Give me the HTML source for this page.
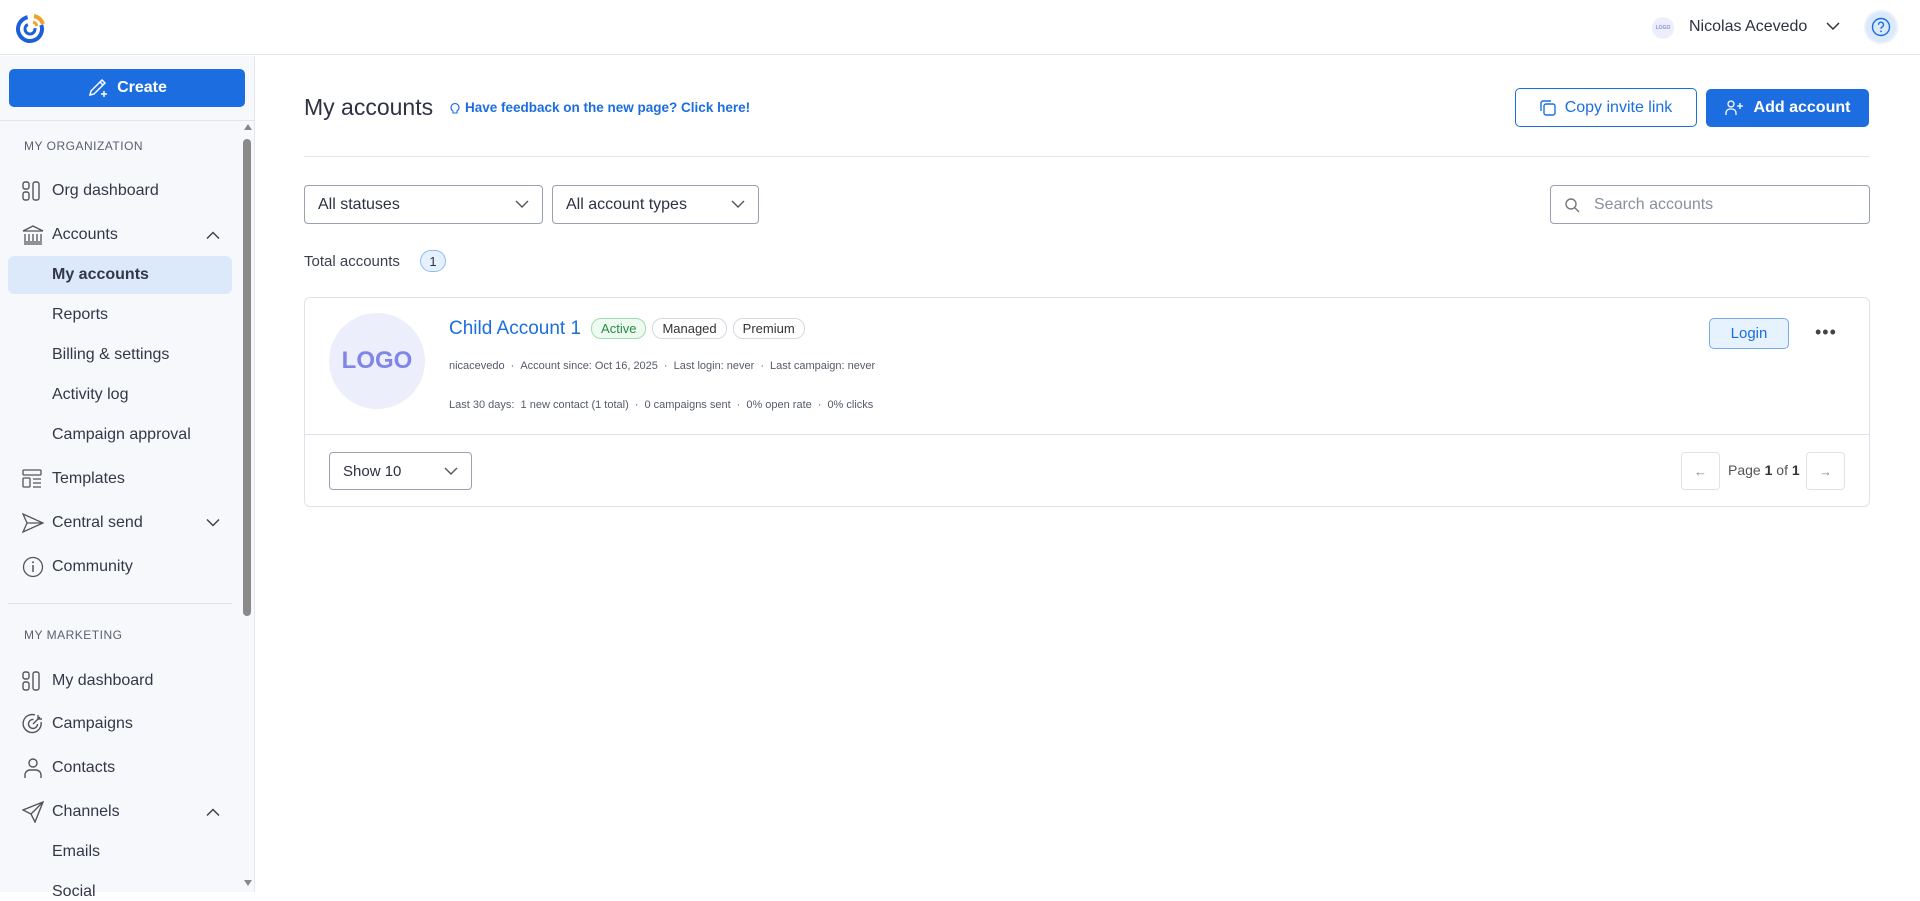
<!DOCTYPE html>
<html><head><meta charset="utf-8">
<style>
*{box-sizing:border-box;margin:0;padding:0}
body{width:1920px;height:892px;overflow:hidden;background:#fff;font-family:"Liberation Sans",sans-serif;color:#2d3142;position:relative}
.a{position:absolute}
.hdr{left:0;top:0;width:1920px;height:55px;border-bottom:1px solid #e3e5ea;background:#fff}
.side{left:0;top:56px;width:255px;height:836px;background:#f7f8fc;border-right:1px solid #e6e8ee}
.create{left:9px;top:69px;width:236px;height:38px;background:#1c6ee0;border-radius:5px;color:#fff;font-weight:bold;font-size:16px;display:flex;align-items:center;justify-content:center;gap:8px}
.sec{left:24px;font-size:12px;letter-spacing:.5px;color:#5a5f70}
.it{left:52px;font-size:16px;color:#333848;transform:translateY(-50%)}
.ic{left:22px;transform:translateY(-50%)}
.chev{left:206px;transform:translateY(-50%)}
.sel{border:1px solid #9aa0b0;border-radius:4px;height:39px;display:flex;align-items:center;padding:0 13px;font-size:16px;color:#2d3142;justify-content:space-between}
.pill{display:inline-block;border:1px solid #d5d8df;border-radius:10px;font-size:13px;padding:2px 9px;margin-left:6px;vertical-align:middle;color:#333}
.meta{font-size:11px;color:#555b6b;white-space:nowrap}
.meta b{font-weight:normal;margin:0 6px}
</style></head><body>
<div class="a hdr"></div>
<svg class="a" style="left:14px;top:12px" width="34" height="32" viewBox="0 0 34 32">
<circle cx="16" cy="17" r="12" fill="none" stroke="#1c5fd8" stroke-width="4" stroke-dasharray="58 20" transform="rotate(-20 16 17)"/>
<circle cx="16" cy="17" r="5" fill="none" stroke="#1c5fd8" stroke-width="3" stroke-dasharray="22 10" transform="rotate(-10 16 17)"/>
<path d="M20 4 A12 12 0 0 1 29 12" stroke="#f0a12a" stroke-width="4" fill="none"/>
<path d="M19 10 A6 6 0 0 1 23 14" stroke="#f0a12a" stroke-width="3" fill="none"/>
</svg>
<div class="a" style="left:1652px;top:17px;width:22px;height:22px;border-radius:50%;background:#eceefb;font-size:5px;color:#8a8fe0;display:flex;align-items:center;justify-content:center;font-weight:bold">LOGO</div>
<div class="a" style="left:1689px;top:18px;font-size:16px;color:#2d3142">Nicolas Acevedo</div>
<svg class="a" style="left:1826px;top:21px" width="14" height="10"><path d="M1 2l6 6 6-6" stroke="#333" stroke-width="1.5" fill="none"/></svg>
<div class="a" style="left:1866px;top:12px;width:30px;height:30px;border-radius:50%;background:#dbe9fb;box-shadow:0 0 0 2px #e8f1fd"></div>
<svg class="a" style="left:1871px;top:17px" width="20" height="20" viewBox="0 0 20 20"><circle cx="10" cy="10" r="8.5" fill="none" stroke="#1c6ee0" stroke-width="1.4"/><path d="M7.5 7.8a2.5 2.5 0 1 1 3.5 2.2c-.8.4-1 .9-1 1.7" stroke="#1c6ee0" stroke-width="1.4" fill="none"/><circle cx="10" cy="14.3" r=".9" fill="#1c6ee0"/></svg>

<div class="a side"></div>
<div class="a create"><svg width="22" height="20" viewBox="0 0 22 20"><path d="M3 17l1-4 9-9 3 3-9 9z M13 4l2-2 3 3-2 2" stroke="#fff" stroke-width="1.5" fill="none"/><path d="M17 13v6M14 16h6" stroke="#fff" stroke-width="1.5"/></svg>Create</div>
<div class="a" style="left:0;top:120px;width:255px;border-top:1px solid #e3e5ea"></div>
<div class="a" style="left:244px;top:124px;width:0;height:0;border:4px solid transparent;border-bottom:6px solid #888;border-top:0"></div>
<div class="a" style="left:243px;top:139px;width:8px;height:477px;background:#8a8a8a;border-radius:4px"></div>
<div class="a" style="left:244px;top:880px;border:4px solid transparent;border-top:6px solid #888;border-bottom:0"></div>

<div class="a sec" style="top:139px">MY ORGANIZATION</div>
<div class="a" style="left:8px;top:256px;width:224px;height:38px;background:#dbe9fb;border-radius:6px"></div>
<svg class="a ic" style="top:191px" width="22" height="20" viewBox="0 0 22 20"><rect x="1" y="1" width="6" height="7" rx="2" fill="none" stroke="#555" stroke-width="1.4"/><rect x="1" y="11" width="6" height="8" rx="2" fill="none" stroke="#555" stroke-width="1.4"/><rect x="11" y="1" width="6" height="18" rx="2" fill="none" stroke="#555" stroke-width="1.4"/></svg>
<div class="a it" style="top:191px">Org dashboard</div>
<svg class="a ic" style="top:235px" width="22" height="20" viewBox="0 0 22 20"><path d="M1 6l10-5 10 5H1zM2 19h18M3 9v7M7 9v7M11 9v7M15 9v7M19 9v7M2 17h18" stroke="#555" stroke-width="1.3" fill="none"/></svg>
<div class="a it" style="top:235px">Accounts</div>
<svg class="a chev" style="top:235px" width="14" height="9"><path d="M1 8l6-6 6 6" stroke="#444" stroke-width="1.5" fill="none"/></svg>
<div class="a it" style="top:275px;font-weight:bold">My accounts</div>
<div class="a it" style="top:315px">Reports</div>
<div class="a it" style="top:355px">Billing &amp; settings</div>
<div class="a it" style="top:395px">Activity log</div>
<div class="a it" style="top:435px">Campaign approval</div>
<svg class="a ic" style="top:479px" width="22" height="20" viewBox="0 0 22 20"><rect x="1" y="1" width="18" height="5" rx="1" fill="none" stroke="#555" stroke-width="1.3"/><rect x="1" y="9" width="7" height="9" rx="1" fill="none" stroke="#555" stroke-width="1.3"/><path d="M11 10h8M11 14h8M11 18h8" stroke="#555" stroke-width="1.3"/></svg>
<div class="a it" style="top:479px">Templates</div>
<svg class="a ic" style="top:523px" width="22" height="20" viewBox="0 0 22 20"><path d="M1 1l20 9-20 9 4-9zM5 10h16" stroke="#555" stroke-width="1.3" fill="none"/></svg>
<div class="a it" style="top:523px">Central send</div>
<svg class="a chev" style="top:523px" width="14" height="9"><path d="M1 1l6 6 6-6" stroke="#444" stroke-width="1.5" fill="none"/></svg>
<svg class="a ic" style="top:567px" width="22" height="22" viewBox="0 0 22 22"><circle cx="11" cy="11" r="9.5" fill="none" stroke="#555" stroke-width="1.3"/><path d="M11 9v7" stroke="#555" stroke-width="1.5"/><circle cx="11" cy="6.3" r="1" fill="#555"/></svg>
<div class="a it" style="top:567px">Community</div>
<div class="a" style="left:8px;top:603px;width:224px;border-top:1px solid #e1e3e8"></div>
<div class="a sec" style="top:628px">MY MARKETING</div>
<svg class="a ic" style="top:681px" width="22" height="20" viewBox="0 0 22 20"><rect x="1" y="1" width="6" height="7" rx="2" fill="none" stroke="#555" stroke-width="1.4"/><rect x="1" y="11" width="6" height="8" rx="2" fill="none" stroke="#555" stroke-width="1.4"/><rect x="11" y="1" width="6" height="18" rx="2" fill="none" stroke="#555" stroke-width="1.4"/></svg>
<div class="a it" style="top:681px">My dashboard</div>
<svg class="a ic" style="top:724px" width="22" height="22" viewBox="0 0 22 22"><path d="M19 9a9 9 0 1 1-6-7" stroke="#555" stroke-width="1.4" fill="none"/><path d="M15.5 11a4.5 4.5 0 1 1-4-4.5" stroke="#555" stroke-width="1.4" fill="none"/><path d="M11 11l7-7M16 2v4h4" stroke="#555" stroke-width="1.4" fill="none"/></svg>
<div class="a it" style="top:724px">Campaigns</div>
<svg class="a ic" style="top:768px" width="22" height="22" viewBox="0 0 22 22"><circle cx="11" cy="6" r="4" fill="none" stroke="#555" stroke-width="1.4"/><path d="M3 21v-3a5 5 0 0 1 5-5h6a5 5 0 0 1 5 5v3" stroke="#555" stroke-width="1.4" fill="none"/></svg>
<div class="a it" style="top:768px">Contacts</div>
<svg class="a ic" style="top:812px" width="22" height="22" viewBox="0 0 22 22"><path d="M21 1L1 9l8 4 4 8zM21 1L9 13" stroke="#555" stroke-width="1.4" fill="none"/></svg>
<div class="a it" style="top:812px">Channels</div>
<svg class="a chev" style="top:812px" width="14" height="9"><path d="M1 8l6-6 6 6" stroke="#444" stroke-width="1.5" fill="none"/></svg>
<div class="a it" style="top:852px">Emails</div>
<div class="a it" style="top:892px">Social</div>

<div class="a" style="left:304px;top:94px;font-size:23px;color:#2d3142">My accounts</div>
<svg class="a" style="left:450px;top:100px" width="10" height="15" viewBox="0 0 10 15"><path d="M3 11a4 4 0 1 1 4 0v2H3z" stroke="#1c6ee0" stroke-width="1.1" fill="none"/></svg>
<div class="a" style="left:465px;top:100px;font-size:13.5px;font-weight:bold;color:#1c6ee0">Have feedback on the new page? Click here!</div>
<div class="a" style="left:1515px;top:88px;width:182px;height:39px;border:1px solid #1c6ee0;border-radius:5px;color:#1c6ee0;font-size:16px;display:flex;align-items:center;justify-content:center;gap:9px"><svg width="16" height="16" viewBox="0 0 16 16"><rect x="4" y="4" width="11" height="11" rx="2" fill="none" stroke="#1c6ee0" stroke-width="1.4"/><path d="M1 11V3a2 2 0 0 1 2-2h8" stroke="#1c6ee0" stroke-width="1.4" fill="none"/></svg>Copy invite link</div>
<div class="a" style="left:1706px;top:89px;width:163px;height:38px;background:#1c6ee0;border-radius:5px;color:#fff;font-size:16px;font-weight:bold;display:flex;align-items:center;justify-content:center;gap:9px"><svg width="20" height="16" viewBox="0 0 20 16"><circle cx="6" cy="4" r="3" fill="none" stroke="#fff" stroke-width="1.3"/><path d="M1 15v-2a4 4 0 0 1 4-4h2a4 4 0 0 1 4 4v2M15 3v6M12 6h6" stroke="#fff" stroke-width="1.3" fill="none"/></svg>Add account</div>
<div class="a" style="left:304px;top:156px;width:1566px;border-top:1px solid #e3e5ea"></div>

<div class="a sel" style="left:304px;top:185px;width:239px">All statuses<svg width="14" height="9"><path d="M1 1l6 6 6-6" stroke="#555" stroke-width="1.4" fill="none"/></svg></div>
<div class="a sel" style="left:552px;top:185px;width:207px">All account types<svg width="14" height="9"><path d="M1 1l6 6 6-6" stroke="#555" stroke-width="1.4" fill="none"/></svg></div>
<div class="a sel" style="left:1550px;top:185px;width:320px;justify-content:flex-start;gap:14px;color:#8a8f9c"><svg width="16" height="16" viewBox="0 0 16 16"><circle cx="7" cy="7" r="5" fill="none" stroke="#777" stroke-width="1.4"/><path d="M11 11l4 4" stroke="#777" stroke-width="1.4"/></svg>Search accounts</div>

<div class="a" style="left:304px;top:253px;font-size:15px;color:#3a3f4f">Total accounts</div>
<div class="a" style="left:420px;top:250px;width:26px;height:22px;border-radius:11px;background:#e6f1fe;border:1px solid #8cbcf2;font-size:13px;display:flex;align-items:center;justify-content:center">1</div>

<div class="a" style="left:304px;top:297px;width:1566px;height:210px;border:1px solid #dfe2e8;border-radius:6px"></div>
<div class="a" style="left:305px;top:434px;width:1564px;border-top:1px solid #dfe2e8"></div>
<div class="a" style="left:329px;top:313px;width:96px;height:96px;border-radius:50%;background:#eceefb;color:#7f86e6;font-weight:bold;font-size:24px;display:flex;align-items:center;justify-content:center">LOGO</div>
<div class="a" style="left:449px;top:318px;font-size:19px;color:#1c6ee0;white-space:nowrap">Child Account 1<span class="pill" style="margin-left:10px;border-color:#9fdcb0;background:#ecfaef;color:#2a8a45">Active</span><span class="pill">Managed</span><span class="pill">Premium</span></div>
<div class="a meta" style="left:449px;top:360px">nicacevedo<b>·</b>Account since: Oct 16, 2025<b>·</b>Last login: never<b>·</b>Last campaign: never</div>
<div class="a meta" style="left:449px;top:399px">Last 30 days:&nbsp; 1 new contact (1 total)<b>·</b>0 campaigns sent<b>·</b>0% open rate<b>·</b>0% clicks</div>
<div class="a" style="left:1709px;top:318px;width:80px;height:31px;border:1px solid #74aaf0;background:#e6f2fe;border-radius:5px;color:#1c6ee0;font-size:15px;display:flex;align-items:center;justify-content:center">Login</div>
<div class="a" style="left:1815px;top:322px;font-size:18px;color:#444;letter-spacing:1px">•••</div>

<div class="a sel" style="left:329px;top:452px;width:143px;height:38px;font-size:15px">Show 10<svg width="14" height="9"><path d="M1 1l6 6 6-6" stroke="#555" stroke-width="1.4" fill="none"/></svg></div>
<div class="a" style="left:1681px;top:452px;width:39px;height:38px;border:1px solid #dfe2e8;border-radius:4px;display:flex;align-items:center;justify-content:center;color:#888;font-size:13px">←</div>
<div class="a" style="left:1728px;top:462px;font-size:14px;color:#555">Page <b style="color:#333">1</b> of <b style="color:#333">1</b></div>
<div class="a" style="left:1806px;top:452px;width:39px;height:38px;border:1px solid #dfe2e8;border-radius:4px;display:flex;align-items:center;justify-content:center;color:#888;font-size:13px">→</div>
</body></html>
